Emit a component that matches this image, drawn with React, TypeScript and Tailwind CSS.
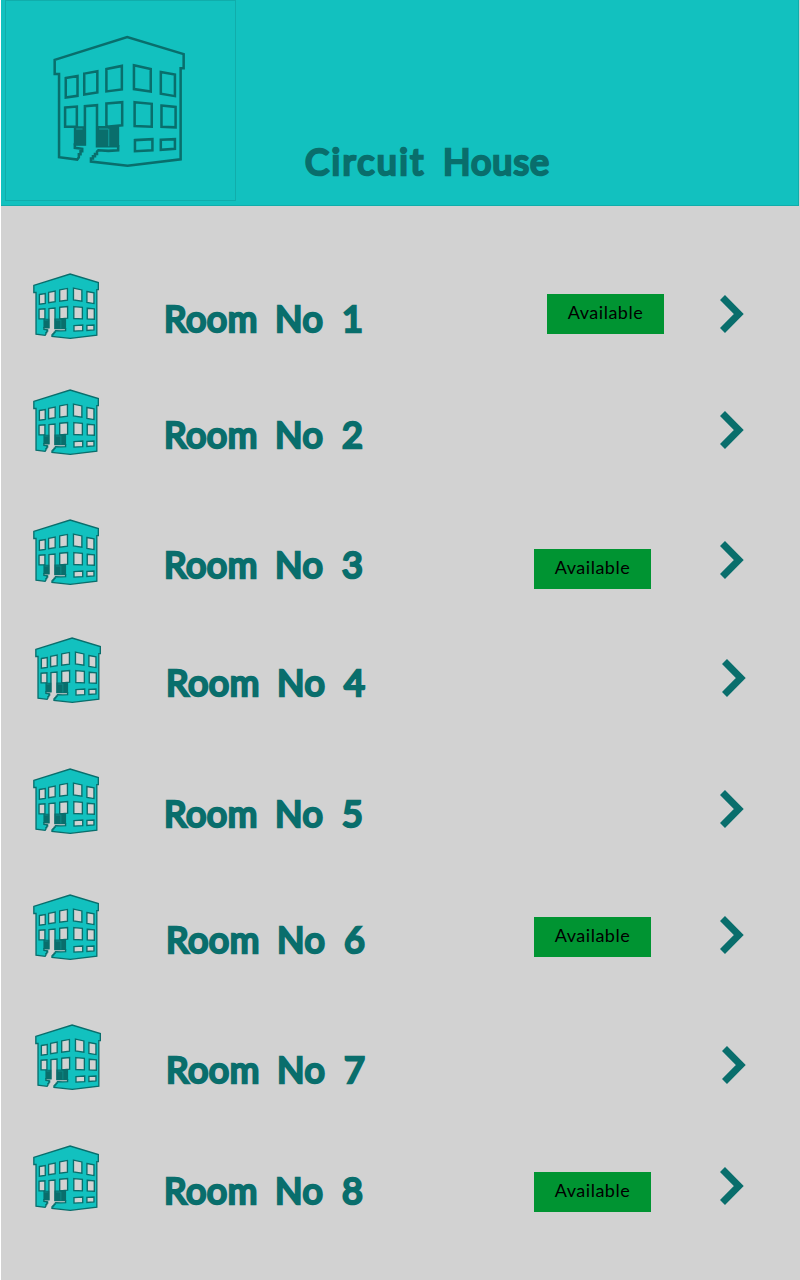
type Room = {
  no: number;
  row: string;
  text: string;
  badge?: string;
};

const rooms: Room[] = [
  { no: 1, row: "mt-[67px] pl-[32px]", text: "ml-[65px]", badge: "mt-[21px] ml-[173px]" },
  { no: 2, row: "mt-[50px] pl-[32px]", text: "ml-[65px]" },
  { no: 3, row: "mt-[64px] pl-[32px]", text: "ml-[65px]", badge: "mt-[30px] ml-[160px]" },
  { no: 4, row: "mt-[52px] pl-[34px]", text: "ml-[65px]" },
  { no: 5, row: "mt-[65px] pl-[32px]", text: "ml-[65px]" },
  { no: 6, row: "mt-[60px] pl-[32px]", text: "ml-[67px]", badge: "mt-[23px] ml-[158px]" },
  { no: 7, row: "mt-[64px] pl-[34px]", text: "ml-[65px]" },
  { no: 8, row: "mt-[55px] pl-[32px]", text: "ml-[65px]", badge: "mt-[27px] ml-[160px]" },
];

const facade =
  "M165 181 L381 113 L549 164 V206 H540 V477 L382 496 L273 484 V475 H279 V468 H285 V461 H291 V454 L295 450 L325 452 L354 450 V438 H291 V316 L255 319 V433 H225 V443 L247 446 V453 H242 V462 H237 V471 L232 478 L178 471 V223 H165 Z";
const windows =
  "M198 235 L233 229 V288 L198 293 Z M253 222 L292 215 V278 L253 284 Z M319 208 L365 199 V269 L319 275 Z M401 197 L451 208 V275 L401 268 Z M481 217 L523 225 V289 L481 282 Z M196 323 L231 320 V380 H196 Z M319 311 L366 307 V376 L319 380 Z M403 307 L454 312 V380 L403 378 Z M483 317 L525 321 V382 L483 380 Z M404 420 L456 417 V450 L404 453 Z M481 419 L523 417 V446 L481 449 Z";

function Building({ className, strokeWidth }: { className: string; strokeWidth: number }) {
  return (
    <svg viewBox="160 107 393 393" className={className} aria-hidden="true">
      <path
        d={`${facade} ${windows}`}
        fill="#12c1bf"
        fillRule="evenodd"
        stroke="#096e6c"
        strokeWidth={strokeWidth}
      />
      <path d="M222 379 H257 V435 H222 Z M288 378 H357 V440 H288 Z" fill="#096e6c" />
      <path d="M326 386 V438 M297 387 H324 M229 387 H248" stroke="#12a09e" strokeWidth="3" fill="none" />
    </svg>
  );
}

function Chevron() {
  return (
    <svg viewBox="0 0 24 38" className="mt-[22px] -ml-px h-[38px] w-[24px] shrink-0" aria-hidden="true">
      <path d="M2.5 2.5 L18.8 19 L2.5 35.5" fill="none" stroke="#096e6c" strokeWidth="7" />
    </svg>
  );
}

const lettering =
  "font-['Comic_Sans_MS','Lato',sans-serif] text-[36px] leading-[44px] whitespace-nowrap text-[#096e6c] [-webkit-text-stroke:2.7px_#096e6c]";

export default function App() {
  return (
    <main className="flex h-[1280px] w-[800px] flex-col overflow-hidden border-l border-white bg-[#d2d2d2]">
      <header className="flex h-[206px] w-[798px] shrink-0 border-r border-b border-[#10adab] bg-[#12c1bf] pl-[4px]">
        <div className="h-[201px] w-[231px] shrink-0 border border-[#10adab] pt-[34px] pl-[47px]">
          <Building className="h-[132px] w-[132px]" strokeWidth={7.5} />
        </div>
        <h1 className={`ml-[69px] flex pt-[139px] ${lettering}`}>
          <span className="w-[138px] tracking-[2.4px]">Circuit </span>
          <span className="tracking-[1px]">House</span>
        </h1>
      </header>
      <ul className="flex flex-col">
        {rooms.map((room) => (
          <li key={room.no} className={`flex h-[66px] items-start ${room.row}`}>
            <Building className="h-[66px] w-[66px] shrink-0" strokeWidth={8} />
            <div className={`flex w-[210px] shrink-0 pt-[23px] ${lettering} ${room.text}`}>
              <span className="w-[111px] tracking-[0.5px]">Room </span>
              <span className="w-[67px] tracking-[0.5px]">No </span>
              <span>{room.no}</span>
            </div>
            <div
              className={`flex shrink-0 ${room.text === "ml-[67px]" ? "w-[345px]" : "w-[347px]"}`}
            >
              {room.badge && (
                <span
                  className={`flex h-[40px] w-[117px] shrink-0 items-center justify-center bg-[#009432] pb-[3px] font-['Comic_Sans_MS','Lato',sans-serif] text-[18px] tracking-[0.5px] text-black ${room.badge}`}
                >
                  Available
                </span>
              )}
            </div>
            <Chevron />
          </li>
        ))}
      </ul>
    </main>
  );
}
